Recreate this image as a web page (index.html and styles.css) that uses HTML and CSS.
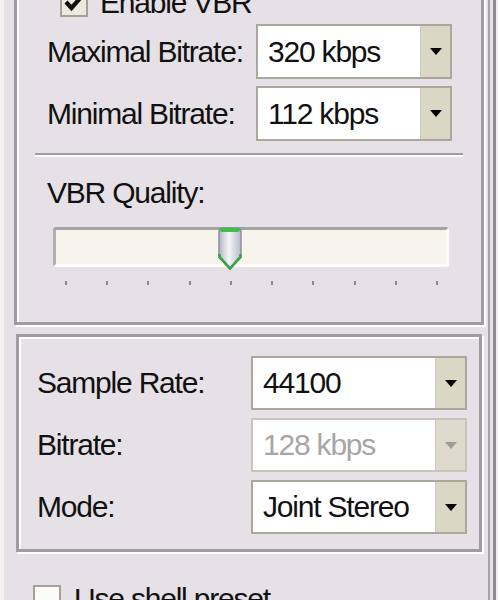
FILE: index.html
```html
<!DOCTYPE html>
<html>
<head>
<meta charset="utf-8">
<link rel="stylesheet" href="styles.css">
</head>
<body>
<div class="page">
  <div class="main">
    <section class="group upper">
      <div class="check-row vbr">
        <span class="checkbox checked">
          <svg width="24" height="24" viewBox="0 0 24 24"><path d="M4 11 L9.5 17 L20 5" fill="none" stroke="#111" stroke-width="4.2"/></svg>
        </span>
        <span class="label">Enable VBR</span>
      </div>
      <div class="field-grid upper-grid">
        <span class="label">Maximal Bitrate:</span>
        <div class="combo"><span class="value">320 kbps</span><span class="btn"><i class="arrow"></i></span></div>
        <span class="label">Minimal Bitrate:</span>
        <div class="combo"><span class="value">112 kbps</span><span class="btn"><i class="arrow"></i></span></div>
      </div>
      <div class="separator"></div>
      <div class="label quality">VBR Quality:</div>
      <div class="slider">
        <div class="track"></div>
        <svg class="thumb" width="26" height="44" viewBox="0 0 26 44">
          <defs>
            <linearGradient id="tg" x1="0" y1="0" x2="1" y2="0">
              <stop offset="0" stop-color="#b4b6c6"/>
              <stop offset="0.45" stop-color="#f4f4f8"/>
              <stop offset="1" stop-color="#b8bacb"/>
            </linearGradient>
          </defs>
          <path d="M2 5 Q2 1 6 1 H20 Q24 1 24 5 V30 L13 42 L2 30 Z" fill="url(#tg)" stroke="#8c8e9c" stroke-width="1.5"/>
          <rect x="3" y="1" width="20" height="4" rx="2" fill="#3fbf45"/>
          <path d="M2.5 27 V30 L13 41.5 L23.5 30 V27" fill="none" stroke="#3aa548" stroke-width="2.6"/>
        </svg>
      </div>
      <div class="ticks"><i></i><i></i><i></i><i></i><i></i><i></i><i></i><i></i><i></i><i></i></div>
    </section>

    <section class="group lower">
      <div class="field-grid lower-grid">
        <span class="label">Sample Rate:</span>
        <div class="combo"><span class="value">44100</span><span class="btn"><i class="arrow"></i></span></div>
        <span class="label">Bitrate:</span>
        <div class="combo disabled"><span class="value">128 kbps</span><span class="btn"><i class="arrow"></i></span></div>
        <span class="label">Mode:</span>
        <div class="combo"><span class="value">Joint Stereo</span><span class="btn"><i class="arrow"></i></span></div>
      </div>
    </section>

    <div class="check-row shell">
      <span class="checkbox"></span>
      <span class="label">Use shell preset</span>
    </div>
  </div>
  <div class="edge"></div>
</div>
</body>
</html>
```

FILE: styles.css
```css
* { box-sizing: border-box; }

html, body {
  margin: 0;
  padding: 0;
  background: #e6e1e6;
}

body {
  font-family: "Liberation Sans", Arial, sans-serif;
  font-size: 30px;
  letter-spacing: -1.2px;
  color: #111;
}

.page {
  display: flex;
  width: 498px;
  height: 600px;
  overflow: hidden;
  background: #e6e1e6;
  border-left: 4px solid #f3f1f1;
}

.main {
  width: 482px;
  flex: none;
}

.edge {
  flex: none;
  width: 12px;
  margin-left: 2px;
  border-left: 2px solid #a4a2a7;
  position: relative;
  box-shadow: inset -4px 0 0 #f0eef0, inset -7px 0 0 #8e8c92;
}

.label {
  line-height: 34px;
  white-space: nowrap;
}

.group {
  border: 3px solid #9e9ca1;
  box-shadow: inset 2px 2px 0 #fff, 2px 2px 0 #fff;
}

.upper {
  margin-top: -20px;
  margin-left: 10px;
  width: 470px;
  padding: 6px 29px 37px 30px;
}

.lower {
  margin-top: 9px;
  margin-left: 12px;
  width: 466px;
  padding: 19px 12px 15px 18px;
}

.check-row {
  display: flex;
  align-items: center;
  height: 28px;
}

.check-row.vbr {
  margin-left: 13px;
  gap: 12px;
}

.check-row.shell {
  margin-top: 33px;
  margin-left: 29px;
  gap: 13px;
}

.checkbox {
  flex: none;
  width: 28px;
  height: 28px;
  border: 2px solid #a5a293;
  background: #fbfbf8;
  display: flex;
  align-items: center;
  justify-content: center;
}

.checkbox.checked {
  background: #ece9df;
}

.field-grid {
  display: grid;
  align-items: center;
}

.upper-grid {
  margin-top: 7px;
  grid-template-columns: 209px 196px;
  grid-auto-rows: 55px;
  row-gap: 7px;
}

.lower-grid {
  grid-template-columns: 214px 216px;
  grid-auto-rows: 54px;
  row-gap: 8px;
}

.combo {
  display: flex;
  height: 100%;
  border: 2px solid #aaa89b;
  background: #fff;
}

.combo .value {
  flex: 1;
  padding-left: 10px;
  line-height: 34px;
  display: flex;
  align-items: center;
  white-space: nowrap;
}

.combo .btn {
  flex: none;
  width: 30px;
  background: #dbd7c5;
  border-left: 1px solid #cdc9b6;
  display: flex;
  align-items: center;
  justify-content: center;
}

.arrow {
  display: block;
  width: 0;
  height: 0;
  border-left: 6px solid transparent;
  border-right: 6px solid transparent;
  border-top: 7px solid #000;
}

.combo.disabled {
  border-color: #c7c5ba;
}

.combo.disabled .value {
  color: #a6a6a6;
}

.combo.disabled .btn {
  background: #dedbcc;
}

.combo.disabled .arrow {
  border-top-color: #9c9c9c;
}

.separator {
  margin: 12px -11px 0 -12px;
  border-top: 2px solid #a09ea3;
  border-bottom: 2px solid #fff;
}

.quality {
  margin-top: 19px;
}

.slider {
  position: relative;
  margin-top: 17px;
  margin-left: 6px;
  width: 396px;
  height: 40px;
}

.track {
  height: 40px;
  background: #f6f4ec;
  border-top: 3px solid #a3a3a3;
  border-left: 3px solid #b0b0b0;
  border-right: 3px solid #fcfcfa;
  border-bottom: 3px solid #fcfcfa;
  border-radius: 3px;
}

.thumb {
  position: absolute;
  left: 164px;
  top: 0;
}

.ticks {
  margin-top: 14px;
  margin-left: 6px;
  width: 396px;
  padding: 0 11px 0 12px;
  display: flex;
  justify-content: space-between;
}

.ticks i {
  display: block;
  width: 2px;
  height: 4px;
  background: #8c8c8c;
}
```
